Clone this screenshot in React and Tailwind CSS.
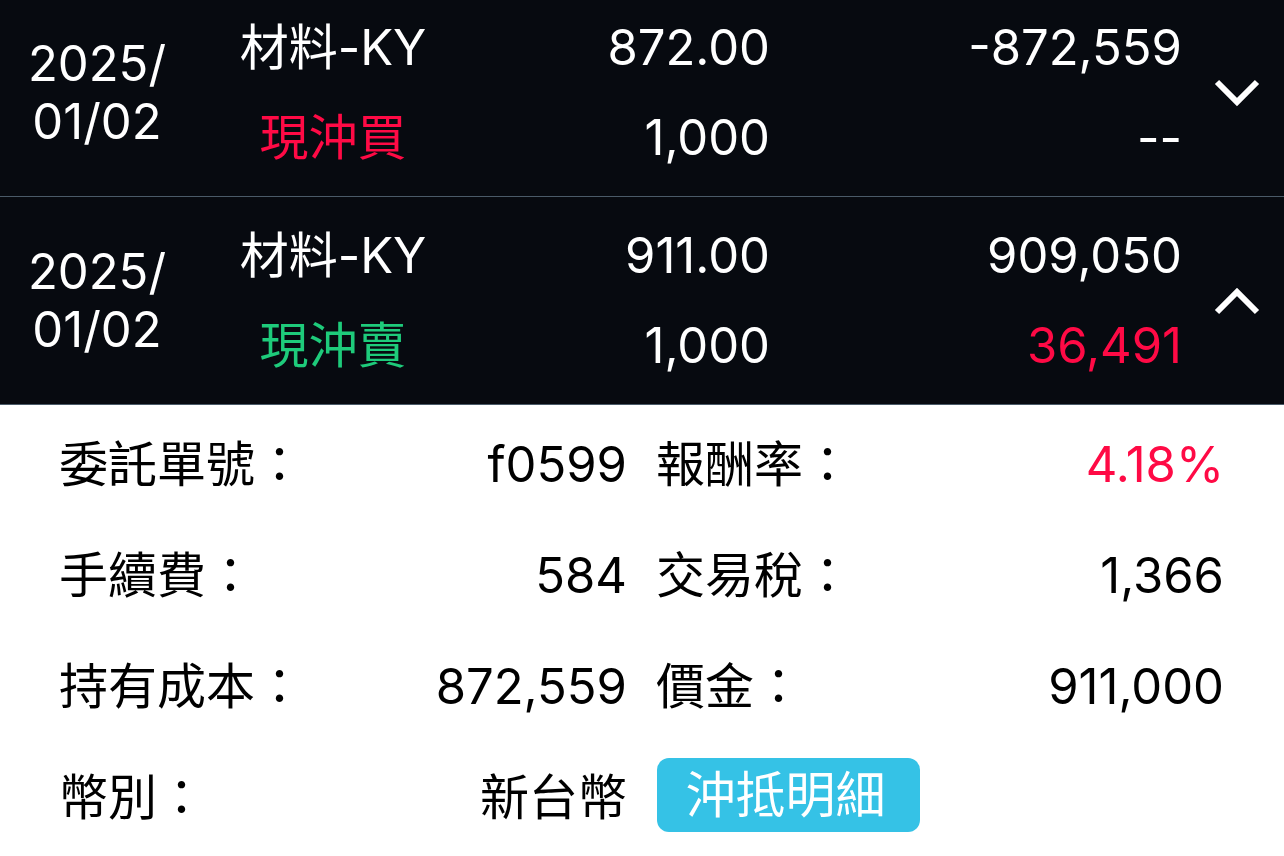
import { useState } from 'react'

// Day-trade settlement list: two trade rows (dark) + expanded detail panel (light)

const trades = [
  {
    id: 1,
    date: ['2025/', '01/02'],
    name: '材料-KY',
    side: '現沖買',
    sideColor: 'text-[#ff0a45]',
    price: '872.00',
    qty: '1,000',
    amount: '-872,559',
    profit: '--',
    profitColor: 'text-white',
  },
  {
    id: 2,
    date: ['2025/', '01/02'],
    name: '材料-KY',
    side: '現沖賣',
    sideColor: 'text-[#1ecb7b]',
    price: '911.00',
    qty: '1,000',
    amount: '909,050',
    profit: '36,491',
    profitColor: 'text-[#ff0a45]',
  },
]

const details = [
  ['委託單號：', 'f0599', '報酬率：', '4.18%', 'text-[#ff0a45]'],
  ['手續費：', '584', '交易稅：', '1,366', 'text-black'],
  ['持有成本：', '872,559', '價金：', '911,000', 'text-black'],
]

const Chevron = ({ up }) => (
  <svg width="46" height="28" viewBox="0 0 46 28" fill="none">
    <polyline
      points={up ? '3,25 23,5 43,25' : '3,3 23,23 43,3'}
      stroke="white"
      strokeWidth="6"
      strokeLinejoin="miter"
    />
  </svg>
)

const TradeRow = ({ trade, open, onToggle }) => (
  <div
    className="flex items-center h-[208px] border-b border-[#4a5a68] cursor-pointer"
    onClick={onToggle}
  >
    {/* Date */}
    <div className="w-[194px] text-center leading-[58px] text-white">
      <div>{trade.date[0]}</div>
      <div>{trade.date[1]}</div>
    </div>

    {/* Name + side */}
    <div className="w-[278px] text-center leading-[90px]">
      <div className="text-white">{trade.name}</div>
      <div className={trade.sideColor}>{trade.side}</div>
    </div>

    {/* Price + qty */}
    <div className="w-[298px] text-right leading-[90px] text-white">
      <div>{trade.price}</div>
      <div>{trade.qty}</div>
    </div>

    {/* Amount + profit */}
    <div className="w-[412px] text-right leading-[90px]">
      <div className="text-white">{trade.amount}</div>
      <div className={trade.profitColor}>{trade.profit}</div>
    </div>

    <div className="flex-1 flex justify-center pl-[8px]">
      <Chevron up={open} />
    </div>
  </div>
)

const DetailCell = ({ label, value, valueClass = 'text-black' }) => (
  <div className="flex items-center justify-between h-[111px]">
    <span className="text-black">{label}</span>
    <span className={valueClass}>{value}</span>
  </div>
)

export default function App() {
  const [openId, setOpenId] = useState(2)

  return (
    <div className="w-[1284px] h-[856px] overflow-hidden bg-white font-['Inter','Noto_Sans_CJK_TC',sans-serif] text-[49px] leading-[50px]">
      {/* Trade list — first row partly scrolled off the top */}
      <div className="bg-[#070a10] -mt-[11px]">
        {trades.map((t) => (
          <TradeRow
            key={t.id}
            trade={t}
            open={openId === t.id}
            onToggle={() => setOpenId(openId === t.id ? null : t.id)}
          />
        ))}
      </div>

      {/* Expanded detail */}
      <div className="grid grid-cols-[568px_568px] gap-x-[29px] pl-[59px] pt-[4px]">
        {details.map(([l1, v1, l2, v2, c2]) => (
          <div key={l1} className="contents">
            <DetailCell label={l1} value={v1} />
            <DetailCell label={l2} value={v2} valueClass={c2} />
          </div>
        ))}
        <DetailCell label="幣別：" value="新台幣" />
        <div className="flex items-center h-[111px]">
          <button className="w-[263px] h-[74px] mb-[6px] ml-[1px] rounded-[12px] bg-[#35c2e6] text-white text-[50px] leading-none pr-[6px]">
            沖抵明細
          </button>
        </div>
      </div>
    </div>
  )
}
